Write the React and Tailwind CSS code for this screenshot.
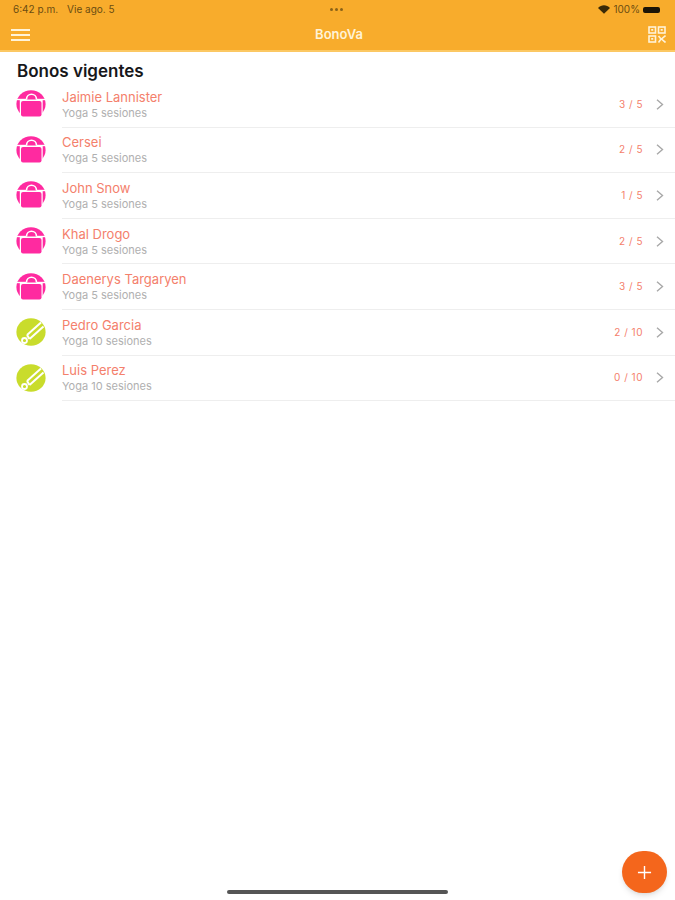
import React from "react";

const bonos = [
  { name: "Jaimie Lannister", plan: "Yoga 5 sesiones", count: "3 / 5", type: "bag" },
  { name: "Cersei", plan: "Yoga 5 sesiones", count: "2 / 5", type: "bag" },
  { name: "John Snow", plan: "Yoga 5 sesiones", count: "1 / 5", type: "bag" },
  { name: "Khal Drogo", plan: "Yoga 5 sesiones", count: "2 / 5", type: "bag" },
  { name: "Daenerys Targaryen", plan: "Yoga 5 sesiones", count: "3 / 5", type: "bag" },
  { name: "Pedro Garcia", plan: "Yoga 10 sesiones", count: "2 / 10", type: "tool" },
  { name: "Luis Perez", plan: "Yoga 10 sesiones", count: "0 / 10", type: "tool" },
];

const BagIcon = () => (
  <svg viewBox="0 0 30 28" className="w-[30px] h-[28px] shrink-0 -mt-[1px]">
    <ellipse cx="15" cy="14" rx="14.6" ry="13.8" fill="#ff2aa0" />
    <path d="M0 9.5h30" stroke="#fff" strokeWidth="1.4" />
    <path d="M10.5 9.5C10.5 2.5 20.5 2.5 20.5 9.5" fill="#ff2aa0" stroke="#fff" strokeWidth="1.6" />
    <path d="M3.8 10h22.9v18H3.8z" fill="#fff" />
    <rect x="5" y="11" width="20.5" height="15.5" rx="2" fill="#ff2aa0" />
  </svg>
);

const ToolIcon = () => (
  <svg viewBox="0 0 30 28" className="w-[30px] h-[28px] shrink-0 -mt-[1px]">
    <ellipse cx="15" cy="14" rx="14.6" ry="13.8" fill="#c9dc2c" />
    <path d="M11 17L25 4.5" stroke="#fff" strokeWidth="2" />
    <path d="M13.5 21L27.5 8.5" stroke="#fff" strokeWidth="2" />
    <path d="M11 17L13.5 21" stroke="#fff" strokeWidth="2" />
    <circle cx="8.5" cy="22.5" r="2.5" fill="none" stroke="#fff" strokeWidth="1.8" />
  </svg>
);

const QrIcon = () => (
  <svg viewBox="0 0 18 17" className="w-[18px] h-[17px]" fill="none" stroke="#fff3d8" strokeWidth="1.6">
    <rect x="1" y="1" width="6.5" height="6" />
    <rect x="10.5" y="1" width="6.5" height="6" />
    <rect x="1" y="10" width="6.5" height="6" />
    <path d="M3.2 3.9h2M12.7 3.9h2M3.2 12.9h2" />
    <path d="M10.5 10l2.5 3l-2.5 3.5M17.5 9.5l-4 3.5l4 3.5" />
  </svg>
);

const WifiIcon = () => (
  <svg viewBox="0 0 14 10" className="w-[12px] h-[9px]">
    <path d="M7 10L0 3.2C4-1 10-1 14 3.2z" fill="#3a2a08" />
  </svg>
);

const Chevron = () => (
  <svg viewBox="0 0 8 11" className="w-[8px] h-[11px] ml-[13px]" fill="none" stroke="#a8a8a8" strokeWidth="1.4">
    <path d="M1 .7L6.5 5.5L1 10.3" />
  </svg>
);

export default function App() {
  return (
    <div className="relative w-[675px] h-[900px] bg-white overflow-hidden font-['Inter','Liberation_Sans',sans-serif]">
      <header className="h-[52px] bg-[#f8ac2c] border-b-2 border-[#fcc863] flex flex-col">
        <div className="h-[19px] pl-[13px] pr-[15px] flex items-center justify-between text-[10px] text-[#6b4d12]">
          <div className="flex gap-[9px] w-[200px]">
            <span>6:42 p.m.</span>
            <span>Vie ago. 5</span>
          </div>
          <div className="flex gap-[2px]">
            <span className="w-[3px] h-[3px] rounded-full bg-[#8a6218]" />
            <span className="w-[3px] h-[3px] rounded-full bg-[#8a6218]" />
            <span className="w-[3px] h-[3px] rounded-full bg-[#8a6218]" />
          </div>
          <div className="flex items-center justify-end gap-[3px] w-[200px]">
            <WifiIcon />
            <span>100%</span>
            <span className="w-[17px] h-[6px] rounded-[2px] bg-[#1c1406]" />
          </div>
        </div>
        <div className="flex-1 pl-[11px] pr-[9px] flex items-center justify-between">
          <div className="flex flex-col gap-[3px] w-[19px]">
            <span className="h-[2px] bg-[#fff3d8]" />
            <span className="h-[2px] bg-[#fff3d8]" />
            <span className="h-[2px] bg-[#fff3d8]" />
          </div>
          <span className="text-[13px] font-semibold text-[#fff3d8]">BonoVa</span>
          <QrIcon />
        </div>
      </header>

      <h1 className="pl-[17px] pt-[9px] text-[17px] leading-[20px] font-semibold text-[#17171a]">Bonos vigentes</h1>

      <ul className="mt-[1px]">
        {bonos.map((b) => (
          <li key={b.name} className="flex items-center h-[45.6px] pl-[16px]">
            {b.type === "bag" ? <BagIcon /> : <ToolIcon />}
            <div className="ml-[16px] flex-1 h-full flex items-center border-b border-[#eeeeee] pr-[11px]">
              <div className="flex-1">
                <div className="text-[13px] leading-[16px] text-[#f4806c]">{b.name}</div>
                <div className="text-[11px] leading-[14px] mt-[1px] text-[#b0b0b0]">{b.plan}</div>
              </div>
              <span className="text-[10px] tracking-[0.5px] text-[#f4806c]">{b.count}</span>
              <Chevron />
            </div>
          </li>
        ))}
      </ul>

      <button className="absolute right-[8px] top-[851px] w-[45px] h-[42px] rounded-full bg-[#f4661c] shadow-md flex items-center justify-center">
        <svg viewBox="0 0 16 16" className="w-[15px] h-[15px]" stroke="#fff" strokeWidth="1.5">
          <path d="M8 1v14M1 8h14" />
        </svg>
      </button>

      <div className="absolute left-[227px] top-[890px] w-[221px] h-[4px] rounded-full bg-[#555555]" />
    </div>
  );
}
